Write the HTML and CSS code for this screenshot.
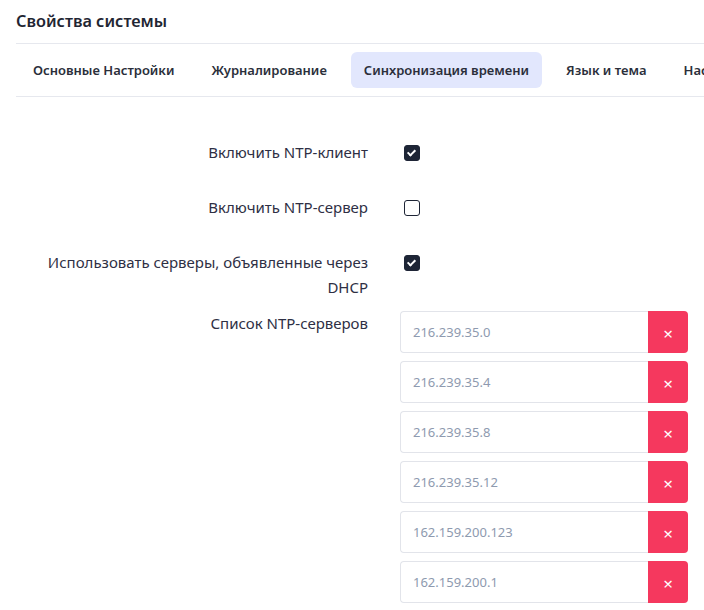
FILE: index.html
```html
<!DOCTYPE html>
<html lang="ru">
<head>
    <meta charset="UTF-8">
    <meta name="viewport" content="width=device-width, initial-scale=1.0">
    <title>Свойства системы</title>
    <link rel="stylesheet" href="styles.css">
</head>
<body>
    <div class="page">
        <h1 class="title">Свойства системы</h1>
        <div class="tabs">
            <div class="tab">Основные Настройки</div>
            <div class="tab">Журналирование</div>
            <div class="tab active">Синхронизация времени</div>
            <div class="tab">Язык и тема</div>
            <div class="tab">Настройки сети</div>
        </div>

        <div class="form">
            <div class="row">
                <label class="label">Включить NTP-клиент</label>
                <div class="control"><span class="check on"></span></div>
            </div>
            <div class="row">
                <label class="label">Включить NTP-сервер</label>
                <div class="control"><span class="check"></span></div>
            </div>
            <div class="row tight">
                <label class="label">Использовать серверы, объявленные через DHCP</label>
                <div class="control"><span class="check on"></span></div>
            </div>
            <div class="row">
                <label class="label">Список NTP-серверов</label>
                <div class="control">
                    <div class="server"><input type="text" placeholder="216.239.35.0"><button class="remove">&times;</button></div>
                    <div class="server"><input type="text" placeholder="216.239.35.4"><button class="remove">&times;</button></div>
                    <div class="server"><input type="text" placeholder="216.239.35.8"><button class="remove">&times;</button></div>
                    <div class="server"><input type="text" placeholder="216.239.35.12"><button class="remove">&times;</button></div>
                    <div class="server"><input type="text" placeholder="162.159.200.123"><button class="remove">&times;</button></div>
                    <div class="server"><input type="text" placeholder="162.159.200.1"><button class="remove">&times;</button></div>
                </div>
            </div>
        </div>
    </div>
</body>
</html>
```

FILE: styles.css
```css
body {
    margin: 0;
    font-family: "Noto Sans", "Open Sans", sans-serif;
    color: #2a2d3e;
    background: #fff;
    overflow: hidden;
}

.page {
    margin-left: 16px;
}

.title {
    margin: 0;
    padding: 8px 0 9px;
    font-size: 16.3px;
    font-weight: 600;
    line-height: 26px;
    color: #1f2633;
    border-bottom: 1px solid #e6e8ee;
}

.tabs {
    display: flex;
    gap: 11px;
    padding: 8px 4px;
    border-bottom: 1px solid #e6e8ee;
    white-space: nowrap;
    overflow: hidden;
}

.tab {
    padding: 0 13px;
    height: 36px;
    line-height: 36px;
    font-size: 13px;
    font-weight: 600;
    color: #2b2f3b;
    border-radius: 6px;
    flex-shrink: 0;
}

.tab.active {
    background-color: #e2e7fd;
}

.form {
    padding-top: 43px;
}

.row {
    display: grid;
    grid-template-columns: 352px 288px;
    column-gap: 32px;
    align-items: start;
    margin-bottom: 30px;
}

.row.tight {
    margin-bottom: 11px;
}

.label {
    text-align: right;
    font-size: 15px;
    line-height: 25px;
    padding-left: 20px;
    color: #2e2f44;
}

.check {
    display: block;
    width: 14px;
    height: 14px;
    margin: 5px 0 0 4px;
    border: 1.5px solid #1e2536;
    border-radius: 3px;
    background: #fff;
    position: relative;
}

.check.on {
    background: #1e2536;
}

.check.on::after {
    content: "";
    position: absolute;
    left: 4px;
    top: 2px;
    width: 3px;
    height: 6px;
    border: solid #fff;
    border-width: 0 2px 2px 0;
    transform: rotate(45deg);
}

.server {
    display: flex;
    height: 42px;
    margin-bottom: 8px;
}

.server input {
    width: 248px;
    box-sizing: border-box;
    height: 42px;
    margin: 0;
    padding: 0 12px;
    border: 1px solid #e2e4ea;
    border-right: none;
    border-radius: 4px 0 0 4px;
    font-family: inherit;
    font-size: 13px;
    outline: none;
}

.server input::placeholder {
    color: #8e9aaf;
}

.remove {
    width: 40px;
    height: 42px;
    padding: 2px 0 0;
    border: none;
    border-radius: 0 4px 4px 0;
    background-color: #f5385e;
    color: #fff;
    font-family: inherit;
    font-size: 17px;
    line-height: 1;
    cursor: pointer;
}
```
